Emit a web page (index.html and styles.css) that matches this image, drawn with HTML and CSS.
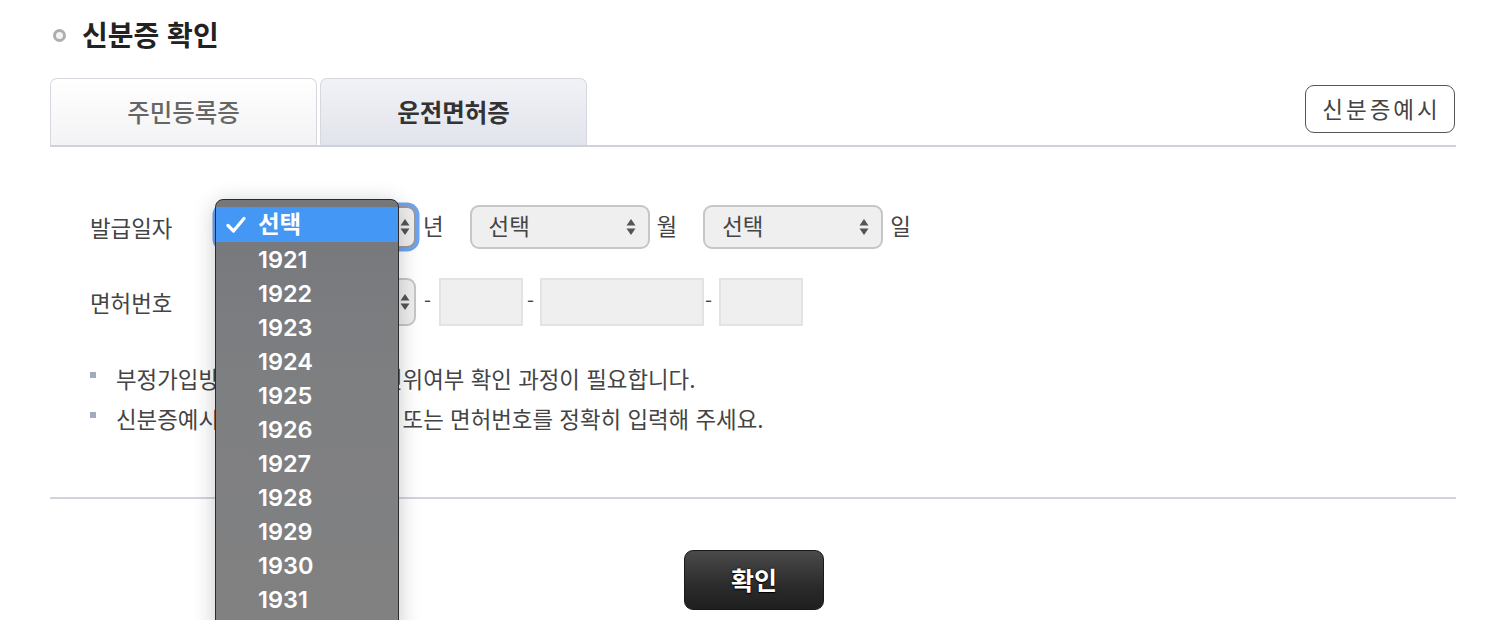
FILE: index.html
```html
<!DOCTYPE html>
<html lang="ko">
<head>
<meta charset="utf-8">
<link rel="stylesheet" href="styles.css">
</head>
<body>
<div class="page">
  <h2 class="title"><span class="title-dot"></span>신분증 확인</h2>

  <div class="tabbar">
    <div class="tabs">
      <div class="tab">주민등록증</div>
      <div class="tab tab-active">운전면허증</div>
    </div>
    <button class="example-btn">신분증예시</button>
  </div>

  <div class="form">
    <div class="row row-date">
      <span class="label">발급일자</span>
      <div class="select select-year focused">
        <span class="sel-text">선택</span>
        <svg class="arrows" width="10" height="18" viewBox="0 0 10 18"><path d="M5 1 L9.5 7.5 H0.5 Z M5 17 L9.5 10.5 H0.5 Z" fill="#555"/></svg>
      </div>
      <span class="unit">년</span>
      <div class="select select-md">
        <span class="sel-text">선택</span>
        <svg class="arrows" width="10" height="18" viewBox="0 0 10 18"><path d="M5 1 L9.5 7.5 H0.5 Z M5 17 L9.5 10.5 H0.5 Z" fill="#555"/></svg>
      </div>
      <span class="unit">월</span>
      <div class="select select-md">
        <span class="sel-text">선택</span>
        <svg class="arrows" width="10" height="18" viewBox="0 0 10 18"><path d="M5 1 L9.5 7.5 H0.5 Z M5 17 L9.5 10.5 H0.5 Z" fill="#555"/></svg>
      </div>
      <span class="unit">일</span>
    </div>

    <div class="row row-license">
      <span class="label">면허번호</span>
      <div class="select select-region">
        <span class="sel-text">서울</span>
        <svg class="arrows" width="10" height="18" viewBox="0 0 10 18"><path d="M5 1 L9.5 7.5 H0.5 Z M5 17 L9.5 10.5 H0.5 Z" fill="#555"/></svg>
      </div>
      <span class="dash d1">-</span>
      <div class="field f-short"></div>
      <span class="dash d2">-</span>
      <div class="field f-long"></div>
      <span class="dash d3">-</span>
      <div class="field f-short"></div>
    </div>

    <ul class="notes">
      <li>부정가입방지를 위해 신분증 진위여부 확인 과정이 필요합니다.</li>
      <li>신분증예시를 참고해 발급일자 또는 면허번호를 정확히 입력해 주세요.</li>
    </ul>

    <div class="dropdown">
      <div class="opt opt-selected">
        <svg class="check" width="20" height="18" viewBox="0 0 20 18"><path d="M2 9.5 L7.5 15 L18 2.5" fill="none" stroke="#fff" stroke-width="3.2" stroke-linecap="round" stroke-linejoin="round"/></svg>
        <span>선택</span>
      </div>
      <div class="opt">1921</div>
      <div class="opt">1922</div>
      <div class="opt">1923</div>
      <div class="opt">1924</div>
      <div class="opt">1925</div>
      <div class="opt">1926</div>
      <div class="opt">1927</div>
      <div class="opt">1928</div>
      <div class="opt">1929</div>
      <div class="opt">1930</div>
      <div class="opt">1931</div>
      <div class="opt">1932</div>
    </div>
  </div>

  <div class="actions">
    <button class="confirm-btn">확인</button>
  </div>
</div>
</body>
</html>
```

FILE: styles.css
```css
* { box-sizing: border-box; }

html, body {
  margin: 0;
  padding: 0;
  background: #fff;
  overflow: hidden;
}

body {
  font-family: "Noto Sans CJK KR", "Noto Sans", sans-serif;
  color: #444;
}

.page {
  width: 1502px;
  height: 620px;
  padding: 0 46px 0 50px;
}

.title {
  margin: 0;
  padding-top: 14px;
  height: 78px;
  display: flex;
  align-items: flex-start;
  font-size: 28px;
  line-height: 40px;
  font-weight: 700;
  color: #222;
}

.title-dot {
  width: 13px;
  height: 13px;
  border-radius: 50%;
  border: 3.5px solid #aeaeae;
  background: #f4f4f4;
  margin: 15px 16px 0 3px;
  filter: blur(0.4px);
}

.tabbar {
  display: flex;
  justify-content: space-between;
  align-items: flex-start;
  border-bottom: 2px solid #cfd1dc;
  height: 69px;
}

.tabs {
  display: flex;
  gap: 3px;
  height: 67px;
}

.tab {
  width: 267px;
  height: 67px;
  border: 1.5px solid #d6d8e0;
  border-bottom: none;
  border-radius: 7px 7px 0 0;
  background: linear-gradient(#ffffff, #f3f3f5);
  display: flex;
  align-items: center;
  justify-content: center;
  font-size: 24.5px;
  color: #666;
  font-weight: 500;
  padding-bottom: 2px;
}

.tab-active {
  background: linear-gradient(#f1f2f6, #e2e4ec);
  color: #333;
  font-weight: 700;
}

.example-btn {
  margin-top: 7px;
  margin-right: 1px;
  width: 150px;
  height: 48px;
  border: 1.5px solid #555;
  border-radius: 9px;
  background: #fff;
  font-family: inherit;
  font-size: 22.5px;
  letter-spacing: 3px;
  color: #444;
  padding: 0 0 2px 3px;
}

.form {
  position: relative;
  padding: 58px 0 0 40px;
  height: 352px;
  border-bottom: 2px solid #d3d3dc;
}

.row {
  display: flex;
  align-items: center;
  font-size: 22.4px;
  color: #444;
}

.row-date { height: 44px; }
.row-license { height: 48px; margin-top: 29px; }

.label {
  width: 126px;
}

.select {
  height: 44px;
  border: 2px solid #c6c6c6;
  border-radius: 9px;
  background: #efefef;
  display: flex;
  align-items: center;
  justify-content: space-between;
  padding: 0 12px 0 17px;
  color: #444;
  font-size: 22.4px;
}

.sel-text { padding-bottom: 4px; }

.select-year {
  width: 200px;
  height: 42px;
  padding-right: 4px;
}

.focused {
  box-shadow: 0 0 0 3.5px #6ea4ef;
  border-color: #9a9a9a;
}

.select-md { width: 180px; }

.select-region {
  width: 200px;
  height: 48px;
  padding-right: 4px;
}

.unit {
  margin: 0 26px 0 7px;
  padding-bottom: 4px;
}

.unit:last-child { margin-right: 0; }

.dash { font-size: 20px; padding-bottom: 4px; }
.d1 { margin: 0 8px 0 8px; }
.d2 { margin: 0 6px 0 4px; }
.d3 { margin: 0 7px 0 1px; }

.field {
  height: 48px;
  background: #efefef;
  border: 2px solid #e3e3e3;
}

.f-short { width: 84px; }
.f-long { width: 164px; }

.notes {
  list-style: none;
  margin: 32px 0 0 0;
  padding: 0;
  font-size: 22.4px;
  line-height: 40px;
  color: #444;
}

.notes li {
  display: flex;
  align-items: center;
}

.notes li::before {
  content: "";
  width: 6px;
  height: 6px;
  background: #a3aabd;
  margin: 0 20px 6px 0;
}

.dropdown {
  position: absolute;
  left: 165px;
  top: 52px;
  width: 184px;
  height: 440px;
  background: linear-gradient(#75777b, #7e7f81 40%, #818181);
  border: 1px solid #2c2c2c;
  border-radius: 8px;
  padding-top: 7px;
  box-shadow: 0 4px 22px rgba(0, 0, 0, 0.22);
  z-index: 5;
  overflow: hidden;
}

.opt {
  height: 34px;
  display: flex;
  align-items: center;
  padding-left: 42px;
  font-family: "Inter", "Noto Sans CJK KR", sans-serif;
  font-size: 23.5px;
  font-weight: 600;
  color: #fff;
}

.opt-selected {
  height: 35px;
  background: #4597f6;
  padding-left: 10px;
  font-family: "Noto Sans CJK KR", sans-serif;
  font-weight: 700;
}

.opt-selected span { padding-bottom: 3px; }

.check { margin-right: 12px; }

.actions {
  display: flex;
  justify-content: center;
  padding-top: 51px;
  padding-right: 46px;
}

.confirm-btn {
  width: 140px;
  height: 60px;
  margin-left: 48px;
  border: 1.5px solid #1a1a1a;
  border-radius: 9px;
  background: linear-gradient(#4a4a4a, #2b2b2b 60%, #1f1f1f);
  color: #fff;
  font-family: "Noto Sans CJK KR", sans-serif;
  font-size: 25px;
  font-weight: 700;
  text-shadow: 0 0 2px #000, 0 1px 1px #000;
  padding-bottom: 4px;
}
```
